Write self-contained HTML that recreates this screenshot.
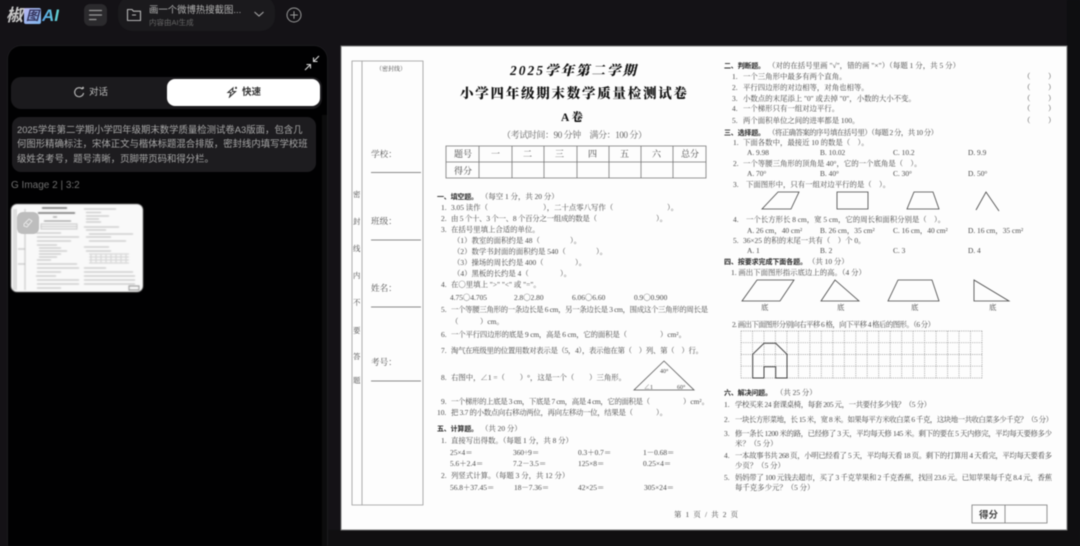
<!DOCTYPE html>
<html lang="zh"><head><meta charset="utf-8"><title>椒图AI</title>
<style>
*{box-sizing:border-box}
html,body{margin:0;padding:0;width:1080px;height:546px;overflow:hidden;background:#141216;font-family:"Liberation Sans","Noto Sans CJK SC",sans-serif}
.a{position:absolute;white-space:nowrap}
#ui{position:absolute;left:0;top:0;width:1080px;height:546px;filter:blur(.4px)}
#paper{position:absolute;left:0;top:0;filter:blur(.45px)}
#paper text{font-family:"Liberation Serif","Noto Serif CJK SC",serif;fill:#484848;font-size:7.4px}
#paper .b{font-weight:700;fill:#2a2a2a;font-family:"Liberation Sans","Noto Sans CJK SC",sans-serif;font-size:7px}
#paper .k{font-family:"Liberation Serif","Noto Serif CJK SC",serif;font-weight:900;fill:#111}
#paper .m{font-size:8.6px;fill:#555}
</style></head><body>
<div id="ui">
 <div class="a" style="left:1067px;top:0;width:13px;height:546px;background:#0e0e10"></div>
 <div class="a" style="left:328px;top:530px;width:752px;height:16px;background:#100f11"></div>
 <div class="a" style="left:6px;top:5px;font:italic 700 17px/22px 'Liberation Sans','Noto Sans CJK SC',sans-serif;color:#c8c8c8">椒</div>
 <div class="a" style="left:24px;top:8px;width:17px;height:16px;background:linear-gradient(135deg,#b9b5f0,#7fb6ec);border-radius:2px;font:italic 700 13px/16px 'Liberation Sans','Noto Sans CJK SC',sans-serif;color:#33335c;text-align:center">图</div>
 <div class="a" style="left:42px;top:5px;font:italic 700 17px/22px 'Liberation Sans',sans-serif;background:linear-gradient(90deg,#5aa4e8,#62d2cf);-webkit-background-clip:text;background-clip:text;color:transparent">AI</div>
 <div class="a" style="left:84px;top:4px;width:23px;height:22px;background:#2b2a2d;border-radius:6px"></div>
 <svg class="a" style="left:88px;top:8px" width="15" height="14" fill="none" stroke="#999" stroke-width="1.2" stroke-linecap="round"><path d="M1.5 2.5H13.5M1.5 7H13.5M1.5 11.5H8"/></svg>
 <div class="a" style="left:118px;top:-4px;width:157px;height:35px;background:#1b1a1d;border-radius:14px"></div>
 <svg class="a" style="left:126px;top:7px" width="16" height="16" fill="none" stroke="#b5b5b5" stroke-width="1.1" stroke-linejoin="round"><path d="M1.5 13.5V2.5H6L7.5 4.2H14.5V13.5ZM6 8H10"/></svg>
 <div class="a" style="left:149px;top:4px;font-size:9.4px;line-height:12px;color:#b0b0b0">画一个微博热搜截图...</div>
 <div class="a" style="left:149px;top:18px;font-size:7.5px;line-height:10px;color:#666">内容由AI生成</div>
 <svg class="a" style="left:253px;top:10px" width="12" height="9" fill="none" stroke="#a5a5a5" stroke-width="1.1"><path d="M1.5 2L6 6L10.5 2"/></svg>
 <svg class="a" style="left:286px;top:7px" width="16" height="16" fill="none" stroke="#999" stroke-width="1"><circle cx="8" cy="8" r="7"/><path d="M8 4.2V11.8M4.2 8H11.8"/></svg>

 <div class="a" style="left:7px;top:45px;width:321px;height:501px;background:#010102;border-radius:14px 14px 0 0;border:1px solid #1c1b1e;border-bottom:0"></div>
 <div class="a" style="left:322px;top:115px;width:5px;height:431px;background:#0c0c0d"></div>
 <svg class="a" style="left:304px;top:55px" width="16" height="16" fill="none" stroke="#d8d8d8" stroke-width="1.1"><path d="M15 1L9.5 6.5M9.5 2.5V6.5H13.5M1 15L6.5 9.5M2.5 9.5H6.5V13.5"/></svg>
 <div class="a" style="left:11px;top:77px;width:311px;height:32px;background:#1b1a1d;border-radius:10px"></div>
 <div class="a" style="left:167px;top:79px;width:153px;height:27px;background:#fff;border-radius:8px"></div>
 <svg class="a" style="left:73px;top:86px" width="12" height="12" fill="none" stroke="#b8b8b8" stroke-width="1.1"><path d="M9.5 3.2A4.5 4.5 0 1 0 10.6 7M4.5 5.5V5.6M7 5.5V5.6M10 .8V3M9 1.9H11"/></svg>
 <div class="a" style="left:89px;top:86px;font-size:9.5px;line-height:14px;color:#b8b8b8">对话</div>
 <svg class="a" style="left:226px;top:86px" width="12" height="12" fill="none" stroke="#333" stroke-width="1.1"><path d="M7 2L2 6.5H5L3.5 11L9.5 5.5H6.5ZM10 .8V3M9 1.9H11"/></svg>
 <div class="a" style="left:242px;top:86px;font-size:9.5px;line-height:14px;font-weight:700;color:#333">快速</div>
 <div class="a" style="left:12px;top:117px;width:304px;height:55px;background:#1d1c1f;border-radius:9px"></div>
 <div class="a" style="left:17px;top:122.5px;font-size:9.4px;line-height:14.7px;color:#a8a8a8">2025学年第二学期小学四年级期末数学质量检测试卷A3版面，包含几<br>何图形精确标注，宋体正文与楷体标题混合排版，密封线内填写学校班<br>级姓名考号，题号清晰，页脚带页码和得分栏。</div>
 <div class="a" style="left:11px;top:179px;font-size:10px;line-height:14px;color:#6e6e6e">G Image 2 | 3:2</div>
 <div class="a" style="left:11px;top:204px;width:132px;height:88px;background:#f9f9f9;border-radius:6px;overflow:hidden;filter:blur(.6px)">
  <svg width="132" height="88" fill="none" stroke="#bbb" stroke-width=".9">
   <path stroke="#555" stroke-width="1.2" d="M31 4H56M27 9H64"/>
   <path stroke="#888" d="M42 13H46M33 17H60"/>
   <path stroke="#c4c4c4" d="M30 20H66V25H30ZM30 22.500H66"/>
   <path d="M25 29H50M26 33H68M26 37H60M26 41H46M28 44H50M28 47H56M28 50H50M28 53H46M26 56H40M26 60H66M26 64H68M26 68H50M25 72H45M26 76H68M26 80H68M26 84H50"/>
   <path d="M73 5H105M75 8.500H90M75 12H98M75 15H88M75 18H90M73 23H108M75 26H95M78 30H122M75 33H100M78 37H115M73 43H98M75 47H100M73 64H95M73 68H122M73 72H124M73 76H124M73 80H124"/>
   <path stroke="#d0d0d0" d="M78 50H118M78 53H118M78 56H118M78 59H118M80 50V59M85 50V59M90 50V59M95 50V59M100 50V59M105 50V59M110 50V59M115 50V59"/>
   <path stroke="#bbb" d="M3 5V86M5 5V86M14 5V86M7 28H14M7 45H14M7 60H14"/>
   <path stroke="#888" d="M118 82H128V86H118Z"/>
  </svg>
 </div>
 <div class="a" style="left:17px;top:212px;width:22px;height:22px;background:#bdbdbd;border-radius:6px"></div>
 <svg class="a" style="left:23px;top:218px" width="10" height="10" fill="none" stroke="#e6e6e6" stroke-width="1"><path d="M1 6L6 1L9 3L4 9L1 8ZM3 5L6 7"/></svg>
</div>

<svg id="paper" width="1080" height="546" viewBox="0 0 1080 546">
<rect x="341" y="46" width="726" height="484" fill="#fdfdfd" stroke="#777" stroke-width="1"/>
<g fill="none" stroke="#999" stroke-width=".8">
<path d="M352 61H423V505H352ZM362 61V505"/>
<path d="M371 172.500H421M371 240H421M371 307H421M371 381H421" stroke="#666"/>
<path d="M446 146H706V178H446ZM446 162H706M479 146V178M512 146V178M544 146V178M577 146V178M609 146V178M641 146V178M673 146V178" stroke="#777"/>
<path d="M634 390L664 361L694 390Z" stroke="#555"/>
<path d="M972 505H1047V523H972ZM1005 505V523" stroke="#777"/>
<path d="M762 209L778 192H799L791 209ZM837 192H868V209H837ZM914 192H933L939 209H907ZM976 210L986 192L999 211" stroke="#444"/>
<path d="M742 301L757 280H794L780 301ZM835 280L821 301H859ZM898 280H932L939 301H888ZM974 280V301H1009Z" stroke="#444"/>
<path stroke="#999" stroke-dasharray="1.2 1" stroke-width=".7" d="M741 331H982M741 342.700H982M741 354.500H982M741 366.200H982M741 378H982M741 331V378M752.500 331V378M764 331V378M775.400 331V378M786.900 331V378M798.400 331V378M809.900 331V378M821.300 331V378M832.800 331V378M844.300 331V378M855.800 331V378M867.200 331V378M878.700 331V378M890.200 331V378M901.700 331V378M913.100 331V378M924.600 331V378M936.100 331V378M947.600 331V378M959 331V378M970.500 331V378M982 331V378"/>
<path stroke="#444" stroke-width="1" d="M752.700 378V354.300L764 343.300H775.700L787 354.300V378H775.700V366.700H764V378Z"/>
</g>

<text x="376" y="71" style="font-size:6px">（密封线）</text>
<text class="m" x="371" y="157">学校：</text><text class="m" x="371" y="224">班级：</text><text class="m" x="371" y="291">姓名：</text><text class="m" x="371" y="365">考号：</text>
<text x="353" y="197">密</text><text x="353" y="224">封</text><text x="353" y="251">线</text><text x="353" y="278">内</text><text x="353" y="305">不</text><text x="353" y="333">要</text><text x="353" y="359">答</text><text x="353" y="383">题</text>

<text class="k" x="510" y="75" textLength="126" style="font-size:13.5px;font-style:italic">2025学年第二学期</text>
<text class="k" x="460" y="98" textLength="227" style="font-size:13.5px">小学四年级期末数学质量检测试卷</text>
<text class="k" x="561" y="121" style="font-size:11.5px">A 卷</text>
<text x="502" y="138" textLength="145" style="font-size:9px;fill:#666">（考试时间：90 分钟　满分：100 分）</text>
<text style="font-size:9px" x="454" y="157">题号</text><text style="font-size:9px" x="454" y="174">得分</text><text style="font-size:9px" x="491" y="157">一</text><text style="font-size:9px" x="523" y="157">二</text><text style="font-size:9px" x="555" y="157">三</text><text style="font-size:9px" x="588" y="157">四</text><text style="font-size:9px" x="620" y="157">五</text><text style="font-size:9px" x="652" y="157">六</text><text style="font-size:9px" x="681" y="157">总分</text>

<text class="b" x="437" y="199" textLength="41">一、填空题。</text><text x="481" y="199">（每空 1 分，共 20 分）</text>
<text x="441" y="210">1.</text><text x="451" y="210">3.05 读作（</text><text x="543" y="210">），二十点零八写作（</text><text x="667" y="210">）。</text>
<text x="441" y="221">2.</text><text x="451" y="221" textLength="146">由 5 个十、3 个一、8 个百分之一组成的数是（</text><text x="656" y="221">）。</text>
<text x="441" y="232">3.</text><text x="451" y="232">在括号里填上合适的单位。</text>
<text x="453" y="243">（1）教室的面积约是 48（</text><text x="570" y="243">）。</text>
<text x="453" y="254">（2）数学书封面的面积约是 540（</text><text x="596" y="254">）。</text>
<text x="453" y="265">（3）操场的周长约是 400（</text><text x="575" y="265">）。</text>
<text x="453" y="276">（4）黑板的长约是 4（</text><text x="560" y="276">）。</text>
<text x="441" y="287">4.</text><text x="451" y="287">在〇里填上 "&gt;" "&lt;" 或 "="。</text>
<text x="450" y="300">4.75〇4.705</text><text x="514" y="300">2.8〇2.80</text><text x="572" y="300">6.06〇6.60</text><text x="634" y="300">0.9〇0.900</text>
<text x="441" y="312">5.</text><text x="451" y="312" textLength="257">一个等腰三角形的一条边长是 6 cm，另一条边长是 3 cm，围成这个三角形的周长是</text>
<text x="451" y="324">（</text><text x="480" y="324">）cm。</text>
<text x="441" y="337">6.</text><text x="451" y="337" textLength="176">一个平行四边形的底是 9 cm，高是 6 cm，它的面积是（</text><text x="660" y="337">）cm²。</text>
<text x="441" y="353">7.</text><text x="451" y="353" textLength="252">淘气在班级里的位置用数对表示是（5，4），表示他在第（　）列、第（　）行。</text>
<text x="441" y="380">8.</text><text x="451" y="380" textLength="175">右图中，∠1 =（　　）°，这是一个（　　）三角形。</text>
<text x="660" y="373" style="font-size:6px">40°</text><text x="677" y="389" style="font-size:6px">60°</text><text x="644" y="389" style="font-size:6px">∠1</text>
<text x="441" y="404">9.</text><text x="451" y="404" textLength="199">一个梯形的上底是 3 cm，下底是 7 cm，高是 4 cm，它的面积是（</text><text x="683" y="404">）cm²。</text>
<text x="437" y="415">10.</text><text x="451" y="415" textLength="182">把 3.7 的小数点向右移动两位，再向左移动一位，结果是（</text><text x="656" y="415">）。</text>
<text class="b" x="437" y="431" textLength="41">五、计算题。</text><text x="481" y="431">（共 20 分）</text>
<text x="441" y="443">1.</text><text x="451" y="443">直接写出得数。（每题 1 分，共 8 分）</text>
<text x="450" y="455">25×4＝</text><text x="513" y="455">360÷9＝</text><text x="578" y="455">0.3＋0.7＝</text><text x="643" y="455">1－0.68＝</text>
<text x="450" y="466">5.6＋2.4＝</text><text x="513" y="466">7.2－3.5＝</text><text x="578" y="466">125×8＝</text><text x="643" y="466">0.25×4＝</text>
<text x="441" y="478">2.</text><text x="451" y="478">列竖式计算。（每题 3 分，共 12 分）</text>
<text x="450" y="490">56.8＋37.45＝</text><text x="514" y="490">18－7.36＝</text><text x="578" y="490">42×25＝</text><text x="644" y="490">305×24＝</text>
<text x="674" y="517" textLength="64">第 1 页 / 共 2 页</text>

<text class="b" x="724" y="68" textLength="41">二、判断题。</text><text x="768" y="68" textLength="192">（对的在括号里画 "√"，错的画 "×"）（每题 1 分，共 5 分）</text>
<text x="732" y="79">1.</text><text x="743" y="79">一个三角形中最多有两个直角。</text>
<text x="732" y="90">2.</text><text x="743" y="90">平行四边形的对边相等，对角也相等。</text>
<text x="732" y="101">3.</text><text x="743" y="101">小数点的末尾添上 "0" 或去掉 "0"，小数的大小不变。</text>
<text x="732" y="111">4.</text><text x="743" y="111">一个梯形只有一组对边平行。</text>
<text x="732" y="123">5.</text><text x="743" y="123">两个面积单位之间的进率都是 100。</text>
<text x="1023" y="79">（</text><text x="1048" y="79">）</text><text x="1023" y="90">（</text><text x="1048" y="90">）</text><text x="1023" y="101">（</text><text x="1048" y="101">）</text><text x="1023" y="111">（</text><text x="1048" y="111">）</text><text x="1023" y="123">（</text><text x="1048" y="123">）</text>
<text class="b" x="724" y="135" textLength="41">三、选择题。</text><text x="768" y="135" textLength="170">（将正确答案的序号填在括号里）（每题 2 分，共 10 分）</text>
<text x="733" y="145">1.</text><text x="743" y="145">下面各数中，最接近 10 的数是（　）。</text>
<text x="747" y="155">A. 9.98</text><text x="820" y="155">B. 10.02</text><text x="893" y="155">C. 10.2</text><text x="968" y="155">D. 9.9</text>
<text x="733" y="166">2.</text><text x="743" y="166">一个等腰三角形的顶角是 40°，它的一个底角是（　）。</text>
<text x="747" y="176">A. 70°</text><text x="820" y="176">B. 40°</text><text x="893" y="176">C. 30°</text><text x="968" y="176">D. 50°</text>
<text x="733" y="187">3.</text><text x="746" y="187">下面图形中，只有一组对边平行的是（　）。</text>
<text x="733" y="222">4.</text><text x="746" y="222">一个长方形长 8 cm，宽 5 cm，它的周长和面积分别是（　）。</text>
<text x="747" y="233">A. 26 cm，40 cm²</text><text x="820" y="233">B. 26 cm，35 cm²</text><text x="893" y="233">C. 16 cm，40 cm²</text><text x="968" y="233">D. 16 cm，35 cm²</text>
<text x="733" y="243">5.</text><text x="743" y="243">36×25 的积的末尾一共有（　）个 0。</text>
<text x="747" y="253">A. 1</text><text x="820" y="253">B. 2</text><text x="893" y="253">C. 3</text><text x="968" y="253">D. 4</text>
<text class="b" x="724" y="264" textLength="83">四、按要求完成下面各题。</text><text x="808" y="264">（共 10 分）</text>
<text x="731" y="275">1. 画出下面图形指示底边上的高。（4 分）</text>
<text x="761" y="310">底</text><text x="837" y="310">底</text><text x="911" y="310">底</text><text x="989" y="310">底</text>
<text x="732" y="327" textLength="203">2. 画出下面图形分别向右平移 6 格，向下平移 4 格后的图形。（6 分）</text>
<text class="b" x="724" y="395" textLength="48">六、解决问题。</text><text x="776" y="395">（共 25 分）</text>
<text x="724" y="407">1.</text><text x="735" y="407" textLength="196">学校买来 24 套课桌椅，每套 205 元，一共要付多少钱？（5 分）</text>
<text x="724" y="422">2.</text><text x="735" y="422" textLength="318">一块长方形菜地，长 15 米，宽 8 米。如果每平方米收白菜 6 千克，这块地一共收白菜多少千克？（5 分）</text>
<text x="724" y="436">3.</text><text x="735" y="436" textLength="317">修一条长 1200 米的路，已经修了 3 天，平均每天修 145 米。剩下的要在 5 天内修完，平均每天要修多少</text>
<text x="735" y="446">米？（5 分）</text>
<text x="724" y="458">4.</text><text x="735" y="458" textLength="317">一本故事书共 268 页，小明已经看了 5 天，平均每天看 18 页。剩下的打算用 4 天看完，平均每天要看多</text>
<text x="735" y="468">少页？（5 分）</text>
<text x="724" y="480">5.</text><text x="735" y="480" textLength="317">妈妈带了 100 元钱去超市，买了 3 千克苹果和 2 千克香蕉，找回 23.6 元。已知苹果每千克 8.4 元，香蕉</text>
<text x="735" y="490">每千克多少元？（5 分）</text>
<text class="b" x="979" y="518" style="font-size:9.5px;fill:#444">得分</text>
</svg>
</body></html>
